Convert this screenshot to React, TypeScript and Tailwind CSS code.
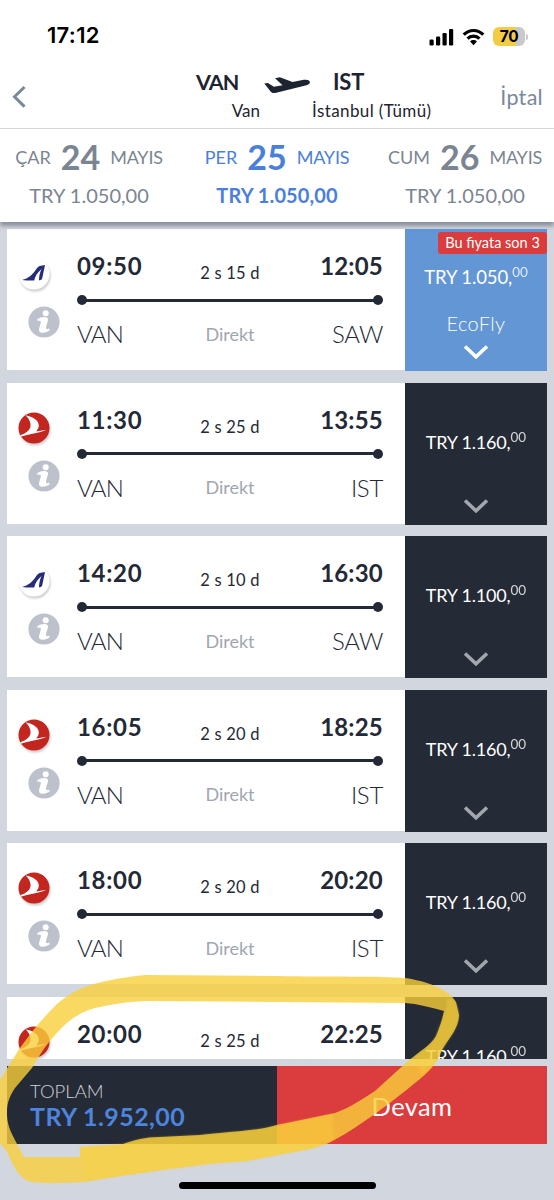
import { useId } from 'react'

type Airline = 'anadolujet' | 'thy'

interface Flight {
  departure: string
  arrival: string
  duration: string
  to: string
  price: string
  airline: Airline
  selected?: boolean
}

const flights: Flight[] = [
  { departure: '09:50', arrival: '12:05', duration: '2 s 15 d', to: 'SAW', price: '1.050', airline: 'anadolujet', selected: true },
  { departure: '11:30', arrival: '13:55', duration: '2 s 25 d', to: 'IST', price: '1.160', airline: 'thy' },
  { departure: '14:20', arrival: '16:30', duration: '2 s 10 d', to: 'SAW', price: '1.100', airline: 'anadolujet' },
  { departure: '16:05', arrival: '18:25', duration: '2 s 20 d', to: 'IST', price: '1.160', airline: 'thy' },
  { departure: '18:00', arrival: '20:20', duration: '2 s 20 d', to: 'IST', price: '1.160', airline: 'thy' },
  { departure: '20:00', arrival: '22:25', duration: '2 s 25 d', to: 'IST', price: '1.160', airline: 'thy' },
]

const days = [
  { day: 'ÇAR', date: '24', active: false },
  { day: 'PER', date: '25', active: true },
  { day: 'CUM', date: '26', active: false },
]

function StatusBar() {
  return (
    <div className="flex h-[65px] shrink-0 items-start justify-between pl-[47px] pr-[26px] text-black">
      <span className="mt-[20px] font-['Inter',sans-serif] text-[22px] leading-[30px] font-semibold tracking-[0.3px]">17:12</span>
      <div className="mt-[27px] flex items-center">
        <svg width="25" height="18" viewBox="0 0 25 18">
          <rect x="0.5" y="11.5" width="4.2" height="6" rx="1.3" />
          <rect x="7" y="8.5" width="4.2" height="9" rx="1.3" />
          <rect x="13.5" y="5" width="4.2" height="12.5" rx="1.3" />
          <rect x="20" y="1" width="4.2" height="16.5" rx="1.3" />
        </svg>
        <svg className="ml-[8px]" width="23" height="18" viewBox="0 0 22 18" fill="none" stroke="#000" strokeWidth="3.1">
          <path d="M1.2 6.7C6.7 1 15.3 1 20.8 6.7" />
          <path d="M5 10.7c3.4-3.5 8.6-3.5 12 0" />
          <path d="M7.6 13.5c2-1.9 4.8-1.9 6.8 0L11 17.3z" fill="#000" stroke="none" />
        </svg>
        <div className="ml-[8px] flex h-[19px] w-[32px] items-center justify-center rounded-[6px] bg-[linear-gradient(90deg,#f2cc45_71%,#c9c9cb_71%)] font-['Inter',sans-serif] text-[15.5px] leading-none font-bold tracking-[-0.3px]">
          70
        </div>
        <div className="ml-[1px] h-[6px] w-[2px] rounded-r-full bg-[#c9c9cb]" />
      </div>
    </div>
  )
}

function NavBar() {
  return (
    <div className="flex h-[64px] shrink-0 items-start border-b border-[#d5d8dd] text-[#1d2431]">
      <svg className="mt-[20px] ml-[11px]" width="16" height="24" viewBox="0 0 16 24" fill="none" stroke="#7b8898" strokeWidth="3">
        <path d="M13.5 2L3.5 11.8l10 9.8" />
      </svg>
      <div className="mt-[4px] ml-[169px] w-[64px]">
        <div className="text-[21.5px] leading-[26px] font-bold tracking-[-0.9px]">VAN</div>
        <div className="mt-[4px] text-right text-[17px] leading-[24px]">Van</div>
      </div>
      <svg className="mt-[12px] ml-[4px]" width="47" height="17" viewBox="0 0 47 17" fill="#1d2431">
        <path d="M.3 6.5l3.6-.5 6 3.7 8.6-1.5L11 1.2 15.8.3 28.6 5l11.2-2.2c3.8-.6 6.2.4 6.1 2.4-.1 1.7-1.9 2.8-4.4 3.4L11.2 15.9c-2.3.4-3.5.1-5-1.9z" />
      </svg>
      <div className="mt-[4px] ml-[1px] w-[120px]">
        <div className="pl-[21px] text-[22px] leading-[26px] font-bold tracking-[-0.2px]">IST</div>
        <div className="mt-[4px] text-[17px] leading-[24px] tracking-[0.4px] whitespace-nowrap">İstanbul (Tümü)</div>
      </div>
      <div className="mt-[18px] ml-auto pr-[11px] text-[21.5px] leading-[28px] tracking-[0.3px] text-[#7b8898]">İptal</div>
    </div>
  )
}

function DayTabs() {
  return (
    <div className="relative z-10 grid h-[93px] shrink-0 grid-cols-[178px_198px_178px] bg-white pt-[9px] shadow-[0_4px_4px_0_rgba(70,75,90,0.5)]">
      {days.map((d) => (
        <div key={d.date} className={d.active ? 'text-center text-[#4a80d9]' : 'text-center text-[#7b8592]'}>
          <div className="flex h-[38px] justify-center gap-[10px] text-[18px] leading-[38px]">
            <span>{d.day}</span>
            <span className="text-[34px] font-bold">{d.date}</span>
            <span className="tracking-[-0.2px]">MAYIS</span>
          </div>
          <div className={d.active ? 'mt-[5px] text-[20px] leading-[28px] font-bold tracking-[0.1px]' : 'mt-[5px] text-[20px] leading-[28px]'}>
            TRY 1.050,00
          </div>
        </div>
      ))}
    </div>
  )
}

function AirlineLogo({ airline }: { airline: Airline }) {
  const clip = useId()
  if (airline === 'anadolujet') {
    return (
      <svg width="34" height="34" viewBox="0 0 34 34" className="overflow-visible">
        <circle cx="17" cy="17" r="15.5" fill="#fff" className="drop-shadow-[1px_2px_1px_rgba(0,0,0,0.2)]" />
        <path d="M5 22.9C11.5 21.4 15.5 17.8 18.6 13c1.2-1.9 2.4-3.5 4-4.1l5.4-.9-2.6 12.6c-.4 2-1.2 2.8-3.4 2.6 0-3.6.7-7.4 2.6-11.2-4.2 3.6-6.6 7.6-7.4 11.4-3.2.2-7.8.1-12.2-.5z" fill="#252d78" />
      </svg>
    )
  }
  return (
    <svg width="34" height="34" viewBox="0 0 34 34" className="overflow-visible">
      <clipPath id={clip}>
        <circle cx="17" cy="17" r="15.5" />
      </clipPath>
      <circle cx="17" cy="17" r="15.5" fill="#c3251f" className="drop-shadow-[1px_2px_1px_rgba(0,0,0,0.2)]" />
      <path clipPath={`url(#${clip})`} fill="#fff" d="M8.5 4.2C16 5.6 21.6 9.5 21.8 14c.1 2.8-1.2 4.8-2.6 6.4l10.3-1.6C22 22.4 12 22.9 3 26l-.6-1.4C8 22.6 13.4 19.8 13.6 14.5 13.7 10.5 11.6 7 8.5 4.2z" />
    </svg>
  )
}

function InfoIcon() {
  return (
    <svg width="32" height="32" viewBox="0 0 32 32">
      <circle cx="16" cy="16" r="15.6" fill="#bcc1cc" />
      <circle cx="17.7" cy="7.2" r="3" fill="#fff" />
      <path d="M9.2 13.2c3.2-1.9 8-2.8 9.9-1.4 1.8 1.4.5 4-.4 6.7-.8 2.7-1.1 4.6.2 4.7.7 0 1.5-.4 2.3-.8l.4 1.9c-2.1 2-6.4 3.2-8.8 2.2-2.4-1-1.9-3.7-1-6.3.8-2.5 1.6-4.9.5-5.4-.7-.3-1.8-.1-2.6.2z" fill="#fff" />
    </svg>
  )
}

function FlightCard({ flight, showRoute }: { flight: Flight; showRoute: boolean }) {
  return (
    <div className="flex h-[142px] shrink-0 text-[#232936]">
      <div className="flex h-[141px] w-[398px] bg-white">
        <div className="flex w-[70px] shrink-0 flex-col pt-[28px]">
          <div className="ml-[10px] h-[34px]">
            <AirlineLogo airline={flight.airline} />
          </div>
          <div className="mt-[15px] ml-[21px]">
            <InfoIcon />
          </div>
        </div>
        <div className="w-[306px] pt-[22px]">
          <div className="flex h-[42px] justify-between">
            <span className="w-[90px] text-[24px] leading-[30px] font-bold tracking-[0.7px]">{flight.departure}</span>
            <span className="mt-[10px] text-[16.5px] leading-[24px] tracking-[0.2px]">{flight.duration}</span>
            <span className="w-[90px] text-right text-[24px] leading-[30px] font-bold tracking-[0.2px]">{flight.arrival}</span>
          </div>
          <div className="flex h-[14px] items-center">
            <div className="h-[10px] w-[10px] rounded-full bg-[#232936]" />
            <div className="-mx-px h-[3px] flex-1 bg-[#232936]" />
            <div className="h-[10px] w-[10px] rounded-full bg-[#232936]" />
          </div>
          {showRoute && (
            <div className="mt-[12px] flex h-[30px] items-center justify-between">
              <span className="w-[90px] text-[24px] font-light tracking-[-0.7px]">VAN</span>
              <span className="text-[18px] text-[#a0a6b1]">Direkt</span>
              <span className="w-[90px] text-right text-[24px] font-light tracking-[-0.3px]">{flight.to}</span>
            </div>
          )}
        </div>
      </div>
      <div
        className={
          flight.selected
            ? 'flex h-[142px] w-[142px] flex-col items-center bg-[#6296d5] text-white'
            : 'flex h-[142px] w-[142px] flex-col items-center bg-[#242a36] text-white'
        }
      >
        {flight.selected && (
          <div className="mt-[3px] h-[22px] w-[109px] self-end rounded-[3px] bg-[#db3c3e] text-center text-[14.5px] leading-[22px] whitespace-nowrap">
            Bu fiyata son 3
          </div>
        )}
        <div className={flight.selected ? 'mt-[10px] flex h-[26px]' : 'mt-[46px] flex h-[26px]'}>
          <span className={flight.selected ? 'text-[18.5px] leading-[26px] tracking-[-0.1px]' : 'text-[18px] leading-[26px] tracking-[-0.2px]'}>
            TRY {flight.price},
          </span>
          <span className="-mt-[5px] text-[13.5px] leading-[26px] opacity-80">00</span>
        </div>
        {flight.selected && <div className="mt-[20px] text-[20px] leading-[26px] font-light tracking-[0.4px]">EcoFly</div>}
        <svg
          className={flight.selected ? 'mt-[8px]' : 'mt-[43px]'}
          width="26"
          height="17"
          viewBox="0 0 26 17"
          fill="none"
          stroke={flight.selected ? '#fff' : '#a3a7ad'}
          strokeWidth="3.6"
        >
          <path d="M2 2.5l11 10.3 11-10.3" />
        </svg>
      </div>
    </div>
  )
}

function TotalBar() {
  return (
    <div className="mx-[7px] mt-[7px] flex h-[78px] shrink-0">
      <div className="w-[270px] bg-[#242a36] pt-[13px] pl-[23px]">
        <div className="text-[18.5px] leading-[24px] font-light text-[#cfd2d8]">TOPLAM</div>
        <div className="-mt-px text-[25px] leading-[28px] font-bold tracking-[0.4px] text-[#4d84de]">TRY 1.952,00</div>
      </div>
      <div className="flex flex-1 items-center justify-center bg-[#db3c3e] pt-[2px] text-[25.5px] tracking-[0.4px] text-white">Devam</div>
    </div>
  )
}

// Freehand highlighter loop drawn over the last flight and the total
function MarkerLoop() {
  return (
    <svg className="pointer-events-none absolute inset-0 z-20" width="554" height="1200" viewBox="0 0 554 1200" fill="#f9d03b">
      <path
        className="blur-[0.5px]"
        fillOpacity="0.8"
        fillRule="evenodd"
        d="M456 1002C448 988 425 981 405 978C380 976 330 977 277 976L145 975C125 977 108 980 94 984C76 989 64 997 54 1007C38 1023 27 1038 18 1051L6 1070C3 1076 0 1079 -2 1083V1142C4 1146 7 1152 10 1158C14 1168 22 1181 32 1182C48 1184 65 1183 85 1182C120 1176 160 1170 200 1165C225 1161 240 1163 252 1160L310 1149C322 1147 333 1141 345 1134C372 1117 394 1100 415 1083C428 1073 437 1064 442 1050C449 1038 459 1028 459 1015Z
           M444 1011C430 1007 418 1004 405 1003L277 1002L145 1001C125 1002 108 1005 95 1008C78 1013 66 1022 56 1034C44 1047 38 1058 32 1068L15 1088C8 1099 7 1104 7 1114C7 1126 12 1134 17 1144L24 1157H80V1147L123 1144C135 1140 145 1137 160 1137L200 1135C235 1131 257 1131 277 1125L335 1113C352 1107 365 1097 375 1091L408 1061C420 1051 431 1045 436 1036C440 1027 442 1020 444 1011Z"
      />
      <path
        className="blur-[1px]"
        fillOpacity="0.35"
        d="M80 1147L123 1144C135 1140 145 1137 160 1137L200 1135C235 1131 257 1131 277 1125L333 1114L334 1140L310 1149L252 1160C220 1164 150 1170 84 1181ZM447 999C455 996 459 1008 459 1015C459 1028 449 1038 442 1050L422 1076L415 1056C426 1049 434 1043 437 1033C441 1021 446 1016 447 999Z"
      />
    </svg>
  )
}

function App() {
  return (
    <div className="relative flex h-[1200px] w-[554px] flex-col overflow-hidden bg-[#d2d6df] font-['Lato','Open_Sans',sans-serif]">
      <div className="shrink-0 bg-white">
        <StatusBar />
        <NavBar />
      </div>
      <DayTabs />
      <div className="flex h-[837px] shrink-0 flex-col gap-[11.5px] overflow-hidden px-[7px] pt-[7px]">
        {flights.map((flight, i) => (
          <FlightCard key={flight.departure} flight={flight} showRoute={i < flights.length - 1} />
        ))}
      </div>
      <TotalBar />
      <div className="mx-auto mt-[38px] h-[7px] w-[197px] shrink-0 rounded-full bg-black" />
      <MarkerLoop />
    </div>
  )
}

export default App
